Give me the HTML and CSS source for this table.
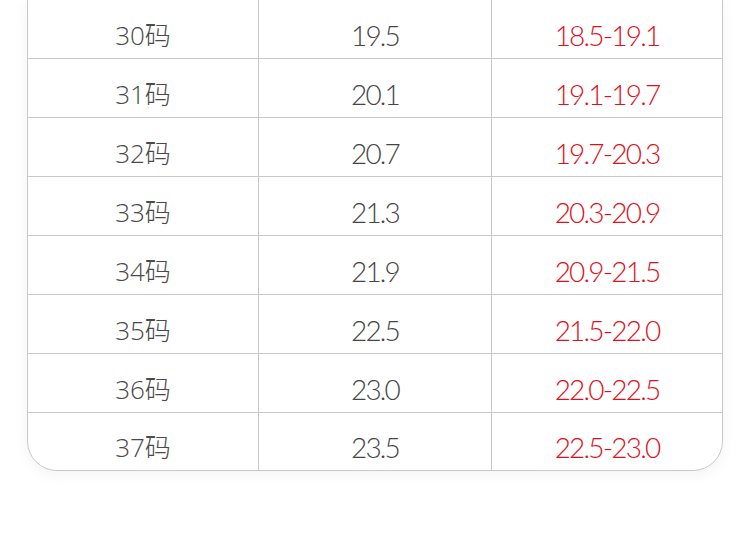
FILE: index.html
```html
<!DOCTYPE html>
<html lang="zh">
<head>
<meta charset="utf-8">
<link rel="stylesheet" href="styles.css">
</head>
<body>
<div class="page">
  <div class="card">
    <div class="row"><div class="cell size">30码</div><div class="cell len">19.5</div><div class="cell range">18.5-19.1</div></div>
    <div class="row"><div class="cell size">31码</div><div class="cell len">20.1</div><div class="cell range">19.1-19.7</div></div>
    <div class="row"><div class="cell size">32码</div><div class="cell len">20.7</div><div class="cell range">19.7-20.3</div></div>
    <div class="row"><div class="cell size">33码</div><div class="cell len">21.3</div><div class="cell range">20.3-20.9</div></div>
    <div class="row"><div class="cell size">34码</div><div class="cell len">21.9</div><div class="cell range">20.9-21.5</div></div>
    <div class="row"><div class="cell size">35码</div><div class="cell len">22.5</div><div class="cell range">21.5-22.0</div></div>
    <div class="row"><div class="cell size">36码</div><div class="cell len">23.0</div><div class="cell range">22.0-22.5</div></div>
    <div class="row last"><div class="cell size">37码</div><div class="cell len">23.5</div><div class="cell range">22.5-23.0</div></div>
  </div>
</div>
</body>
</html>
```
FILE: styles.css
```css
html, body {
  margin: 0;
  padding: 0;
  background: #ffffff;
}
.page {
  padding: 0 0 0 27px;
  height: 547px;
  overflow: hidden;
}
.card {
  width: 696px;
  box-sizing: border-box;
  margin-top: -1px;
  border: 1px solid #c9c9c9;
  border-radius: 0 0 30px 30px;
  box-shadow: 0 4px 14px rgba(0, 0, 0, 0.05);
  background: #fff;
  overflow: hidden;
}
.row {
  display: grid;
  grid-template-columns: 231px 233px 230px;
  height: 59px;
  border-bottom: 1px solid #c9c9c9;
  box-sizing: border-box;
}
.row.last {
  height: 57px;
  border-bottom: none;
}
.cell {
  display: flex;
  justify-content: center;
  align-items: center;
  padding-top: 11px;
  box-sizing: border-box;
  border-right: 1px solid #c9c9c9;
  color: #464646;
  line-height: 1;
}
.cell.range {
  border-right: none;
  color: #e2101a;
}
.cell.size {
  font-family: "Open Sans", "Noto Sans CJK SC", sans-serif;
  font-weight: 300;
  font-size: 26px;
  color: #4a4a4a;
}
.cell.len, .cell.range {
  font-family: "Lato", "Noto Sans", sans-serif;
  font-weight: 300;
  font-size: 28px;
  letter-spacing: -1.8px;
}
```
